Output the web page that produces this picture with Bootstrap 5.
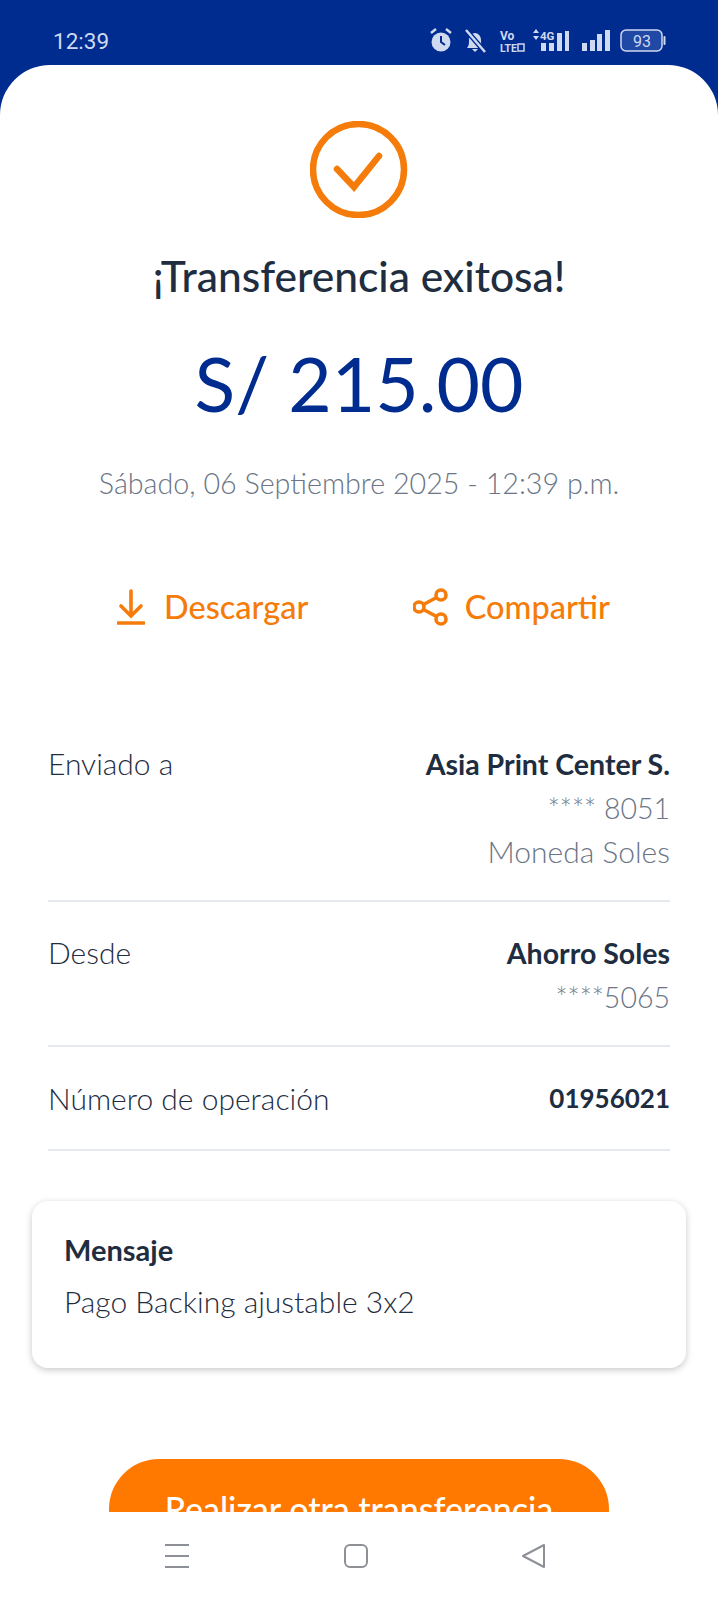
<!DOCTYPE html>
<html lang="es">
<head>
    <meta charset="UTF-8">
    <meta name="viewport" content="width=device-width, initial-scale=1.0">
    <title>Transferencia exitosa</title>
    <link href="https://cdn.jsdelivr.net/npm/bootstrap@5.3.3/dist/css/bootstrap.min.css" rel="stylesheet">
    <style>
        html, body { height: 100%; }
        body { background: #002b8f; font-family: Lato, "Liberation Sans", sans-serif; color: #1f2d3f; overflow: hidden; }
        .status-bar { height: 65px; padding: 27px 52px 0 53px; color: #cfd9f0; }
        .status-time { font-family: Roboto, sans-serif; font-size: 22.5px; line-height: 28px; }
        .status-icons { height: 28px; }
        .sheet { height: 1534px; background: #fff; border-radius: 50px 50px 0 0; overflow: hidden; padding-top: 56px; }
        .check-wrap { height: 97px; }
        .title-text { font-size: 42.5px; font-weight: 500; line-height: 44px; margin: 36px 0 0; color: #202d40; }
        .amount-text { font-size: 75px; font-weight: 400; line-height: 90px; margin: 40px 0 0; color: #002b8f; }
        .date-text { font-size: 28.7px; font-weight: 300; line-height: 36px; margin: 37px 0 0; color: #6b7585; }
        .action-row { margin-top: 84px; height: 44px; padding: 0 108px 0 117px; }
        .action-link { color: #f57c0a; font-size: 32.5px; font-weight: 500; line-height: 44px; text-decoration: none; }
        .gap-dl { gap: 19px; }
        .detail-list { padding: 0 48px; margin-top: 113px; }
        .detail-row { border-bottom: 2px solid #e5e8ec; font-size: 30px; line-height: 43px; }
        .detail-row .lbl { font-weight: 300; }
        .detail-row strong { font-size: 28.5px; font-weight: 700; color: #202d40; }
        .detail-row .sub { color: #6b7585; font-weight: 300; }
        .detail-row .sub-mask { font-size: 28.5px; }
        .detail-row strong.op-num { font-size: 26px; }
        .row-a { height: 160px; }
        .row-b { height: 145px; padding-top: 29px; }
        .row-c { height: 104px; padding-top: 30px; }
        .msg-card { margin: 50px 32px 0; height: 167px; border: 0; border-radius: 16px; padding: 29px 32px; box-shadow: 0 2px 7px rgba(0,0,0,.22); font-size: 30px; line-height: 40px; }
        .msg-card strong { font-size: 29px; font-weight: 700; display: block; margin-bottom: 11px; line-height: 40px; }
        .msg-card span { font-weight: 300; line-height: 40px; }
        .cta-clip { margin-top: 91px; height: 53px; overflow: hidden; }
        .cta-btn { display: block; margin: 0 109px; width: 500px; height: 100px; border: 0; border-radius: 50px; background: #ff7900; color: #fff; font-size: 34px; font-weight: 500; line-height: 96px; padding: 0; text-align: center; }
        .nav-bar { height: 87px; padding: 0 173px 0 164px; }
    </style>
</head>
<body>

    <div class="status-bar d-flex justify-content-between">
        <div class="status-time">12:39</div>
        <div class="status-icons">
            <svg width="236" height="28" viewBox="0 0 236 28" fill="#cfd9f0">
                <!-- alarma -->
                <circle cx="11" cy="15" r="9.5"/>
                <path d="M11 9v6l4 3" fill="none" stroke="#002b8f" stroke-width="2"/>
                <path d="M1 6l5-4M21 6l-5-4" fill="none" stroke="#cfd9f0" stroke-width="2.5"/>
                <!-- campana -->
                <path d="M37 21c2-2 2-5 2-8 0-4 3-7 6-7s6 3 6 7c0 3 0 6 2 8z"/>
                <path d="M42 22h6l-3 3z"/>
                <path d="M36 3l19 22" stroke="#002b8f" stroke-width="5"/>
                <path d="M36 3l19 22" stroke="#cfd9f0" stroke-width="2.5"/>
                <text x="70" y="13" font-family="Roboto, sans-serif" font-size="12" font-weight="700">Vo</text>
                <text x="70" y="25" font-family="Roboto, sans-serif" font-size="10.5" font-weight="700">LTE</text>
                <rect x="88" y="17" width="6" height="7" fill="none" stroke="#cfd9f0" stroke-width="1.5"/>
                <path d="M103 6l3-4 3 4zM103 9l3 4 3-4z"/>
                <text x="110" y="13" font-family="Roboto, sans-serif" font-size="11.5" font-weight="700">4G</text>
                <rect x="111" y="16" width="5" height="8"/><rect x="119" y="16" width="5" height="8"/>
                <rect x="127" y="6" width="5" height="18"/><rect x="135" y="4" width="4" height="20"/>
                <rect x="152" y="16" width="5" height="8"/><rect x="160" y="13" width="5" height="11"/>
                <rect x="167" y="7" width="5" height="17"/><rect x="175" y="3" width="5" height="21"/>
                <!-- bateria -->
                <rect x="191" y="3" width="41" height="21" rx="5" fill="#1f49a5" stroke="#cfd9f0" stroke-width="1.5"/>
                <rect x="233.5" y="9" width="2" height="9" rx="1"/>
                <text x="203" y="20" font-family="Roboto, sans-serif" font-size="16">93</text>
            </svg>
        </div>
    </div>

    <div class="sheet">
        <div class="check-wrap d-flex justify-content-center">
            <svg width="98" height="97" viewBox="0 0 98 97" fill="none" stroke="#f57c0a">
                <circle cx="48.5" cy="48.5" r="45.5" stroke-width="6.5"/>
                <path d="M27 48l17 18 25-31" stroke-width="6.5" stroke-linecap="round" stroke-linejoin="miter"/>
            </svg>
        </div>
        <h1 class="title-text text-center">¡Transferencia exitosa!</h1>
        <div class="amount-text text-center">S/ 215.00</div>
        <p class="date-text text-center">Sábado, 06 Septiembre 2025 - 12:39 p.m.</p>

        <div class="action-row d-flex justify-content-between">
            <a href="#" class="action-link d-flex align-items-center gap-dl">
                <svg width="28" height="36" viewBox="0 0 28 36" fill="none" stroke="#f57c0a" stroke-width="3.6" stroke-linecap="round">
                    <path d="M14 2v24M4 17l10 10 10-10"/>
                    <path d="M1 34h26"/>
                </svg>
                Descargar
            </a>
            <a href="#" class="action-link d-flex align-items-center gap-3">
                <svg width="36" height="38" viewBox="0 0 36 38" fill="none" stroke="#f57c0a" stroke-width="3.6">
                    <circle cx="28" cy="7" r="5"/>
                    <circle cx="6" cy="19" r="5"/>
                    <circle cx="28" cy="31" r="5"/>
                    <path d="M10.5 16.5l13-7M10.5 21.5l13 7"/>
                </svg>
                Compartir
            </a>
        </div>

        <div class="detail-list">
            <div class="detail-row row-a d-flex justify-content-between">
                <span class="lbl">Enviado a</span>
                <div class="text-end">
                    <strong>Asia Print Center S.</strong><br>
                    <span class="sub sub-mask">**** 8051</span><br>
                    <span class="sub">Moneda Soles</span>
                </div>
            </div>
            <div class="detail-row row-b d-flex justify-content-between">
                <span class="lbl">Desde</span>
                <div class="text-end">
                    <strong>Ahorro Soles</strong><br>
                    <span class="sub sub-mask">****5065</span>
                </div>
            </div>
            <div class="detail-row row-c d-flex justify-content-between">
                <span class="lbl">Número de operación</span>
                <strong class="op-num">01956021</strong>
            </div>
        </div>

        <div class="card msg-card">
            <strong>Mensaje</strong>
            <span>Pago Backing ajustable 3x2</span>
        </div>

        <div class="cta-clip">
            <button type="button" class="btn cta-btn">Realizar otra transferencia</button>
        </div>

        <div class="nav-bar d-flex justify-content-between align-items-center">
            <svg width="26" height="26" viewBox="0 0 26 26" stroke="#8d9096" stroke-width="2"><path d="M1 2h24M1 13h24M1 24h24"/></svg>
            <svg width="24" height="26" viewBox="0 0 24 26" fill="none" stroke="#8d9096" stroke-width="2"><rect x="1" y="2" width="22" height="22" rx="5"/></svg>
            <svg width="24" height="26" viewBox="0 0 24 26" fill="none" stroke="#8d9096" stroke-width="2" stroke-linejoin="round"><path d="M23 2v22L2 13z"/></svg>
        </div>
    </div>

    <script src="https://cdn.jsdelivr.net/npm/bootstrap@5.3.3/dist/js/bootstrap.bundle.min.js"></script>
</body>
</html>
